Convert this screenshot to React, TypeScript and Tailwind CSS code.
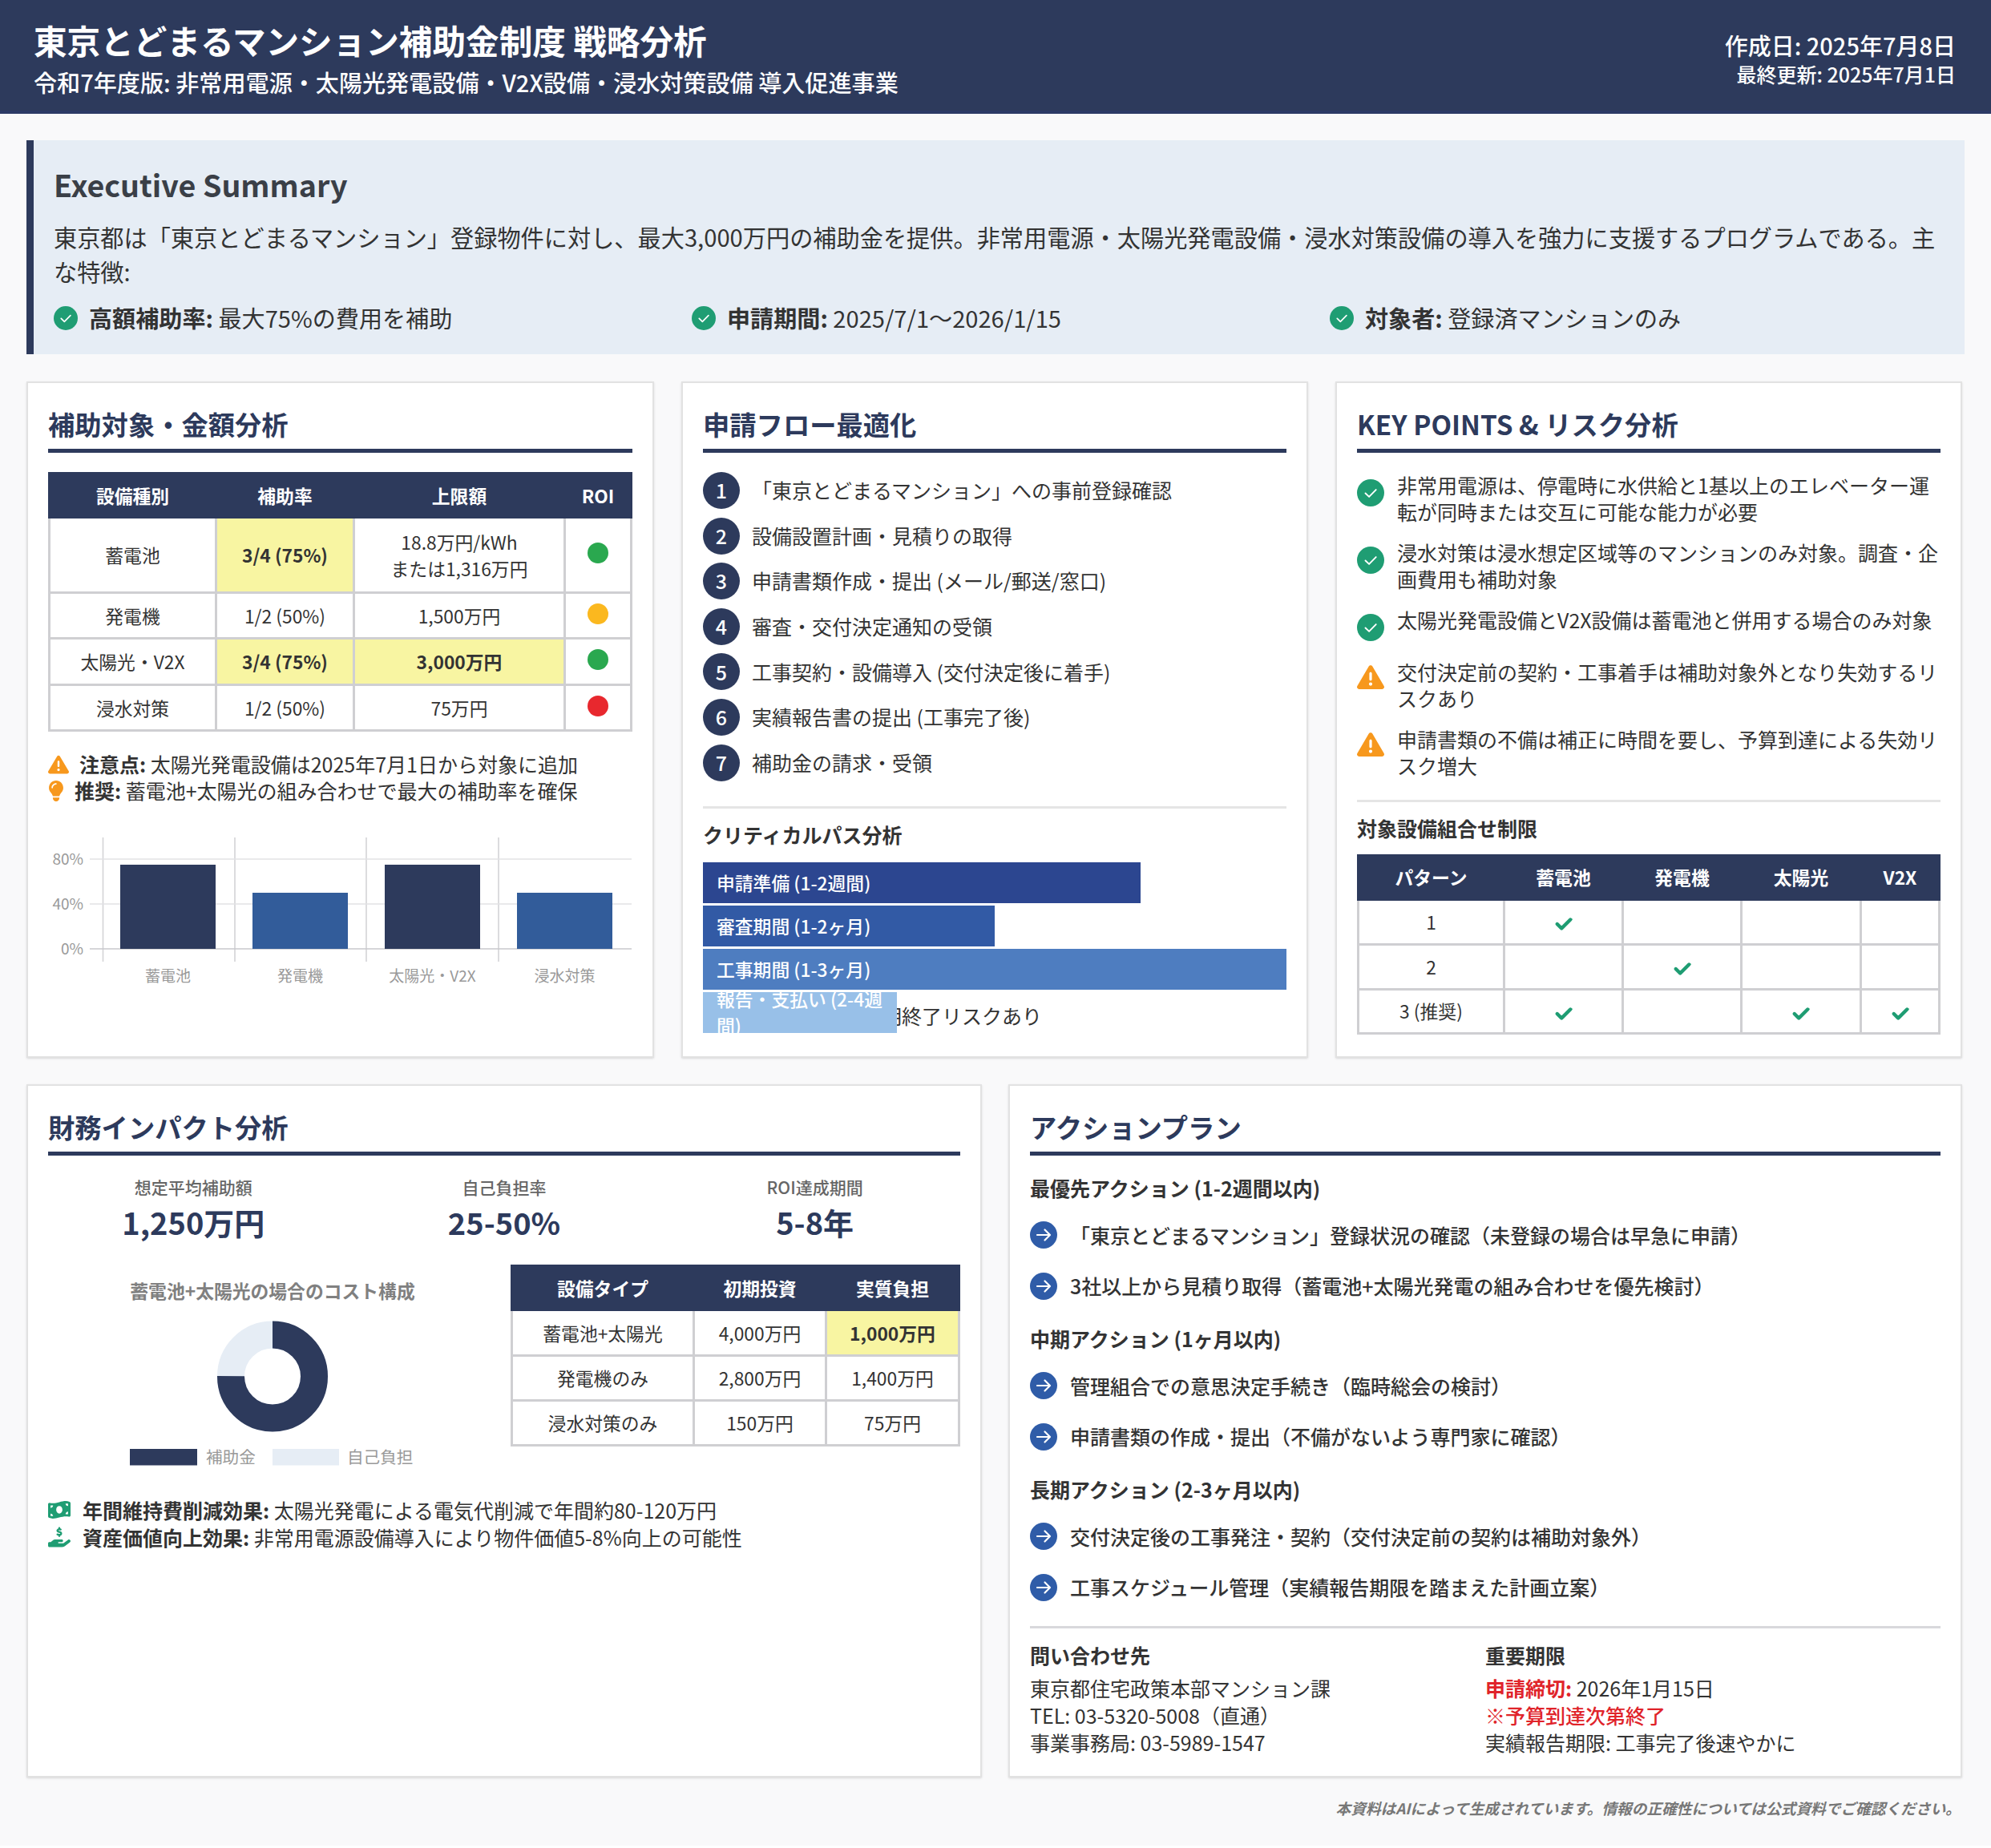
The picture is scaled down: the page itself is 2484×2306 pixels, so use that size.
import { FaCheck, FaTriangleExclamation, FaLightbulb, FaMoneyBillWave, FaHandHoldingDollar } from 'react-icons/fa6';
import type { ReactNode } from 'react';

function CheckCircle({ className }: { className: string }) {
  return (
    <svg viewBox="0 0 34 34" className={className}>
      <circle cx="17" cy="17" r="17" fill="#1f9d73" />
      <path d="M10.5 17.5l4.6 4.4 8.6-8.8" fill="none" stroke="#fff" strokeWidth="1.9" strokeLinecap="round" strokeLinejoin="round" />
    </svg>
  );
}

function ArrowCircle() {
  return (
    <svg viewBox="0 0 34 34" className="w-[34px] h-[34px] shrink-0">
      <circle cx="17" cy="17" r="17" fill="#2f5ca8" />
      <path d="M9 17h15.5M18.5 10.5l6.5 6.5-6.5 6.5" fill="none" stroke="#fff" strokeWidth="2.2" strokeLinecap="round" strokeLinejoin="round" />
    </svg>
  );
}

function Heading({ children }: { children: ReactNode }) {
  return (
    <h2 className="text-[33.3px] leading-[44px] font-bold text-[#2d3a5c] pb-[9px] border-b-[5px] border-[#2d3a5c] mb-[24px]">
      {children}
    </h2>
  );
}

function Th({ children }: { children: ReactNode }) {
  return <th className="border-[3px] border-[#2d3a5c] bg-[#2d3a5c] text-white font-bold text-center">{children}</th>;
}

function Td({ children, hi }: { children?: ReactNode; hi?: boolean }) {
  return (
    <td className={`border-[3px] border-[#cfcfd2] text-center ${hi ? 'bg-[#f8f5a2] font-semibold' : ''}`}>{children}</td>
  );
}

function Dot({ color }: { color: string }) {
  return <span className={`block mx-auto mb-[5px] w-[26px] h-[26px] rounded-full ${color}`} />;
}

function Tick() {
  return <FaCheck strokeWidth={40} className="inline-block w-[22px] h-[22px] text-[#1f9d73]" />;
}

const steps = [
  '「東京とどまるマンション」への事前登録確認',
  '設備設置計画・見積りの取得',
  '申請書類作成・提出 (メール/郵送/窓口)',
  '審査・交付決定通知の受領',
  '工事契約・設備導入 (交付決定後に着手)',
  '実績報告書の提出 (工事完了後)',
  '補助金の請求・受領',
];

const actions = [
  {
    title: '最優先アクション (1-2週間以内)',
    items: ['「東京とどまるマンション」登録状況の確認（未登録の場合は早急に申請）', '3社以上から見積り取得（蓄電池+太陽光発電の組み合わせを優先検討）'],
  },
  {
    title: '中期アクション (1ヶ月以内)',
    items: ['管理組合での意思決定手続き（臨時総会の検討）', '申請書類の作成・提出（不備がないよう専門家に確認）'],
  },
  {
    title: '長期アクション (2-3ヶ月以内)',
    items: ['交付決定後の工事発注・契約（交付決定前の契約は補助対象外）', '工事スケジュール管理（実績報告期限を踏まえた計画立案）'],
  },
];

function BarChart() {
  const bars = [
    { x: 90, y: 40, fill: '#2d3a5c', label: '蓄電池' },
    { x: 255, y: 75, fill: '#325c9a', label: '発電機' },
    { x: 420, y: 40, fill: '#2d3a5c', label: '太陽光・V2X' },
    { x: 585, y: 75, fill: '#325c9a', label: '浸水対策' },
  ];
  return (
    <svg viewBox="0 0 730 200" className="w-[730px] h-[200px] mt-[36px]">
      {[68.5, 233, 397, 562].map((x) => (
        <line key={x} x1={x} x2={x} y1={6} y2={161} stroke="#d4d4d6" strokeWidth="1.6" />
      ))}
      {[33, 89].map((y) => (
        <line key={y} x1={52} x2={728} y1={y} y2={y} stroke="#e2e2e4" strokeWidth="1.6" />
      ))}
      <line x1={52} x2={728} y1={145} y2={145} stroke="#c8c8cc" strokeWidth="1.6" />
      {bars.map((b) => (
        <rect key={b.x} x={b.x} y={b.y} width={119} height={145 - b.y} fill={b.fill} />
      ))}
      {[['80%', 33], ['40%', 89], ['0%', 145]].map(([t, y]) => (
        <text key={t} x={44} y={Number(y) + 7} textAnchor="end" fontSize="19" fill="#999">{t}</text>
      ))}
      {bars.map((b) => (
        <text key={b.label} x={b.x + 59.5} y={186} textAnchor="middle" fontSize="19" fill="#999">{b.label}</text>
      ))}
    </svg>
  );
}

function CostChart() {
  const c = 2 * Math.PI * 52;
  return (
    <svg viewBox="0 0 560 250" className="w-[560px] h-[250px] mt-[12px]">
      <text x={280} y={30} textAnchor="middle" fontSize="22.8" fontWeight="700" fill="#808080">蓄電池+太陽光の場合のコスト構成</text>
      <g transform="rotate(-90 280 127.5)">
        <circle cx={280} cy={127.5} r={52} fill="none" stroke="#e6edf5" strokeWidth="34" />
        <circle cx={280} cy={127.5} r={52} fill="none" stroke="#2d3a5c" strokeWidth="34" strokeDasharray={`${c * 0.75} ${c}`} />
      </g>
      <rect x={102} y={218} width={84} height={20.5} fill="#2d3a5c" />
      <text x={197} y={236} fontSize="20.6" fill="#999">補助金</text>
      <rect x={280} y={218} width={83} height={20.5} fill="#e6edf5" />
      <text x={373} y={236} fontSize="20.6" fill="#999">自己負担</text>
    </svg>
  );
}

export default function App() {
  return (
    <div className="min-h-[2303px] bg-[#f9f9fa] text-[#333] font-['Noto_Sans_CJK_JP','Noto_Sans',sans-serif]">
      {/* Header */}
      <header className="h-[142px] bg-[#2d3a5c] border-b-[4px] border-[#2c3a66] pl-[42px] pr-[44px] pt-[25px] flex justify-between text-white">
        <div>
          <h1 className="text-[41.6px] leading-[50px] font-bold">東京とどまるマンション補助金制度 戦略分析</h1>
          <p className="text-[29.1px] leading-[40px] mt-[6.5px] font-medium">令和7年度版: 非常用電源・太陽光発電設備・V2X設備・浸水対策設備 導入促進事業</p>
        </div>
        <div className="text-right mt-[10.5px]">
          <p className="text-[29px] leading-[40px] font-medium">作成日: 2025年7月8日</p>
          <p className="text-[25px] leading-[32px] font-medium">最終更新: 2025年7月1日</p>
        </div>
      </header>

      <main className="px-[33px] pt-[33px]">
        {/* Summary */}
        <section className="h-[267px] bg-[#e6edf5] border-l-[9px] border-[#2d3a5c] pl-[25px] pr-[22px] pt-[31px]">
          <h2 className="text-[37.6px] leading-[48px] font-bold text-[#3a3f47]">Executive Summary</h2>
          <p className="text-[29.2px] leading-[43px] mt-[20px]">
            東京都は「東京とどまるマンション」登録物件に対し、最大3,000万円の補助金を提供。非常用電源・太陽光発電設備・浸水対策設備の導入を強力に支援するプログラムである。主な特徴:
          </p>
          <div className="grid grid-cols-3 gap-[26px] mt-[20px] text-[29.1px] leading-[33px]">
            <div className="flex items-center gap-[14px]">
              <CheckCircle className="w-[30px] h-[30px] shrink-0" />
              <span><b>高額補助率:</b> 最大75%の費用を補助</span>
            </div>
            <div className="flex items-center gap-[14px]">
              <CheckCircle className="w-[30px] h-[30px] shrink-0" />
              <span><b>申請期間:</b> 2025/7/1〜2026/1/15</span>
            </div>
            <div className="flex items-center gap-[14px]">
              <CheckCircle className="w-[30px] h-[30px] shrink-0" />
              <span><b>対象者:</b> 登録済マンションのみ</span>
            </div>
          </div>
        </section>

        {/* Top cards */}
        <div className="grid grid-cols-[783px_782px_1fr] gap-[34px] mt-[34px] mr-[3px]">
          <section className="h-[844px] bg-white border-2 border-[#e2e2e2] shadow-sm px-[25px] pt-[29px]">
            <Heading>補助対象・金額分析</Heading>
            <table className="w-full table-fixed border-collapse text-[22.8px] leading-[33px]">
              <colgroup>
                <col className="w-[208px]" />
                <col className="w-[172px]" />
                <col className="w-[263px]" />
                <col />
              </colgroup>
              <thead>
                <tr className="h-[55px]"><Th>設備種別</Th><Th>補助率</Th><Th>上限額</Th><Th>ROI</Th></tr>
              </thead>
              <tbody>
                <tr className="h-[94px]">
                  <Td>蓄電池</Td><Td hi>3/4 (75%)</Td>
                  <Td>18.8万円/kWh<br />または1,316万円</Td>
                  <Td><Dot color="bg-[#2aa84f]" /></Td>
                </tr>
                <tr className="h-[57px]">
                  <Td>発電機</Td><Td>1/2 (50%)</Td><Td>1,500万円</Td>
                  <Td><Dot color="bg-[#fbb81f]" /></Td>
                </tr>
                <tr className="h-[58px]">
                  <Td>太陽光・V2X</Td><Td hi>3/4 (75%)</Td><Td hi>3,000万円</Td>
                  <Td><Dot color="bg-[#2aa84f]" /></Td>
                </tr>
                <tr className="h-[57px]">
                  <Td>浸水対策</Td><Td>1/2 (50%)</Td><Td>75万円</Td>
                  <Td><Dot color="bg-[#e8282e]" /></Td>
                </tr>
              </tbody>
            </table>
            <div className="mt-[24px] text-[25px] leading-[33px]">
              <p className="flex items-center">
                <FaTriangleExclamation className="w-[26px] h-[26px] text-[#f7981d] mr-[13px] shrink-0" />
                <span className="whitespace-nowrap"><b>注意点:</b> 太陽光発電設備は2025年7月1日から対象に追加</span>
              </p>
              <p className="flex items-center">
                <FaLightbulb className="w-[20px] h-[26px] text-[#f7981d] mr-[13px] shrink-0" />
                <span className="whitespace-nowrap"><b>推奨:</b> 蓄電池+太陽光の組み合わせで最大の補助率を確保</span>
              </p>
            </div>
            <BarChart />
          </section>

          <section className="h-[844px] bg-white border-2 border-[#e2e2e2] shadow-sm px-[25px] pt-[29px]">
            <Heading>申請フロー最適化</Heading>
            <ol className="flex flex-col gap-[10.6px] mt-[2px]">
              {steps.map((s, i) => (
                <li key={s} className="flex items-center text-[25px]">
                  <span className="w-[46px] h-[46px] rounded-full bg-[#2d3a5c] text-white flex items-center justify-center shrink-0 mr-[15px] font-medium">{i + 1}</span>
                  <span>{s}</span>
                </li>
              ))}
            </ol>
            <div className="h-[3px] bg-[#e5e5e5] mt-[31px]" />
            <h3 className="text-[25px] leading-[33px] font-bold mt-[16px]">クリティカルパス分析</h3>
            <div className="mt-[18px] flex flex-col gap-[3px] text-[22.8px] leading-[33px] text-white font-medium">
              <div className="h-[51px] w-[75%] bg-[#2c4690] px-[17px] flex items-center">申請準備 (1-2週間)</div>
              <div className="h-[51px] w-[50%] bg-[#325aa5] px-[17px] flex items-center">審査期間 (1-2ヶ月)</div>
              <div className="h-[51px] w-full bg-[#4e7dc0] px-[17px] flex items-center">工事期間 (1-3ヶ月)</div>
              <div className="relative z-10 h-[51px] w-[33.3%] bg-[#98c0e8] px-[17px] flex items-center overflow-hidden">報告・支払い (2-4週間)</div>
            </div>
            <p className="-mt-[38px] pl-[23px] text-[25px] leading-[33px]">※予算到達時に早期終了リスクあり</p>
          </section>

          <section className="h-[844px] bg-white border-2 border-[#e2e2e2] shadow-sm px-[25px] pt-[29px]">
            <Heading>KEY POINTS &amp; リスク分析</Heading>
            <ul className="flex flex-col gap-[18px] mt-[5px] text-[25px] leading-[33px]">
              {[
                '非常用電源は、停電時に水供給と1基以上のエレベーター運転が同時または交互に可能な能力が必要',
                '浸水対策は浸水想定区域等のマンションのみ対象。調査・企画費用も補助対象',
                '太陽光発電設備とV2X設備は蓄電池と併用する場合のみ対象',
              ].map((t) => (
                <li key={t} className="flex gap-[16px]">
                  <CheckCircle className="w-[34px] h-[34px] shrink-0 mt-[9px]" />
                  <span>{t}</span>
                </li>
              ))}
            </ul>
            <ul className="flex flex-col gap-[18px] mt-[22px] text-[25px] leading-[33px]">
              {[
                '交付決定前の契約・工事着手は補助対象外となり失効するリスクあり',
                '申請書類の不備は補正に時間を要し、予算到達による失効リスク増大',
              ].map((t) => (
                <li key={t} className="flex gap-[16px]">
                  <FaTriangleExclamation className="w-[34px] h-[34px] shrink-0 mt-[6px] text-[#f7981d]" />
                  <span>{t}</span>
                </li>
              ))}
            </ul>
            <div className="h-[3px] bg-[#e5e5e5] mt-[26px]" />
            <h3 className="text-[25px] leading-[33px] font-bold mt-[15.5px]">対象設備組合せ制限</h3>
            <table className="w-full table-fixed border-collapse text-[22.8px] leading-[33px] mt-[16px]">
              <colgroup>
                <col className="w-[182px]" />
                <col className="w-[148px]" />
                <col className="w-[148px]" />
                <col className="w-[149px]" />
                <col />
              </colgroup>
              <thead>
                <tr className="h-[55px]"><Th>パターン</Th><Th>蓄電池</Th><Th>発電機</Th><Th>太陽光</Th><Th>V2X</Th></tr>
              </thead>
              <tbody>
                <tr className="h-[56px]"><Td>1</Td><Td><Tick /></Td><Td /><Td /><Td /></tr>
                <tr className="h-[56px]"><Td>2</Td><Td /><Td><Tick /></Td><Td /><Td /></tr>
                <tr className="h-[55px]"><Td>3 (推奨)</Td><Td><Tick /></Td><Td /><Td><Tick /></Td><Td><Tick /></Td></tr>
              </tbody>
            </table>
          </section>
        </div>

        {/* Bottom cards */}
        <div className="grid grid-cols-[1192px_1fr] gap-[33px] mt-[33px] mr-[3px]">
          <section className="h-[865px] bg-white border-2 border-[#e2e2e2] shadow-sm px-[25px] pt-[29px]">
            <Heading>財務インパクト分析</Heading>
            <div className="grid grid-cols-3 gap-[25px] mt-[7px] text-center">
              {[
                ['想定平均補助額', '1,250万円'],
                ['自己負担率', '25-50%'],
                ['ROI達成期間', '5-8年'],
              ].map(([label, value]) => (
                <div key={label}>
                  <p className="text-[21px] leading-[30px] font-medium text-[#666]">{label}</p>
                  <p className="text-[38px] leading-[50px] mt-[4px] font-bold text-[#2d3a5c]">{value}</p>
                </div>
              ))}
            </div>
            <div className="flex justify-between mt-[28px]">
              <CostChart />
              <table className="w-[561px] h-[224px] table-fixed border-collapse text-[22.8px] leading-[33px] self-start">
                <colgroup>
                  <col className="w-[227px]" />
                  <col className="w-[165px]" />
                  <col />
                </colgroup>
                <thead>
                  <tr className="h-[55px]"><Th>設備タイプ</Th><Th>初期投資</Th><Th>実質負担</Th></tr>
                </thead>
                <tbody>
                  <tr className="h-[57px]"><Td>蓄電池+太陽光</Td><Td>4,000万円</Td><Td hi>1,000万円</Td></tr>
                  <tr className="h-[56px]"><Td>発電機のみ</Td><Td>2,800万円</Td><Td>1,400万円</Td></tr>
                  <tr className="h-[56px]"><Td>浸水対策のみ</Td><Td>150万円</Td><Td>75万円</Td></tr>
                </tbody>
              </table>
            </div>
            <div className="mt-[27px] text-[25px] leading-[34px]">
              <p className="flex items-center">
                <FaMoneyBillWave className="w-[28px] h-[28px] text-[#1f9d73] mr-[15px] shrink-0" />
                <span><b>年間維持費削減効果:</b> 太陽光発電による電気代削減で年間約80-120万円</span>
              </p>
              <p className="flex items-center">
                <FaHandHoldingDollar className="w-[28px] h-[28px] text-[#1f9d73] mr-[15px] shrink-0" />
                <span><b>資産価値向上効果:</b> 非常用電源設備導入により物件価値5-8%向上の可能性</span>
              </p>
            </div>
          </section>

          <section className="h-[865px] bg-white border-2 border-[#e2e2e2] shadow-sm px-[25px] pt-[29px]">
            <Heading>アクションプラン</Heading>
            <div className="mt-[6.5px] text-[25px] leading-[33px]">
              {actions.map((a, i) => (
                <div key={a.title} className={i > 0 ? 'mt-[32.5px]' : ''}>
                  <h3 className="font-bold">{a.title}</h3>
                  <ul className="mt-[25px] flex flex-col gap-[29.5px]">
                    {a.items.map((t) => (
                      <li key={t} className="flex items-center gap-[16px] font-medium">
                        <ArrowCircle />
                        <span>{t}</span>
                      </li>
                    ))}
                  </ul>
                </div>
              ))}
            </div>
            <div className="h-[3px] bg-[#d8d8dc] mt-[31.5px]" />
            <div className="grid grid-cols-2 mt-[16px] text-[25px] leading-[34px]">
              <div>
                <h3 className="font-bold mb-[7px]">問い合わせ先</h3>
                <p>東京都住宅政策本部マンション課</p>
                <p>TEL: 03-5320-5008（直通）</p>
                <p>事業事務局: 03-5989-1547</p>
              </div>
              <div>
                <h3 className="font-bold mb-[7px]">重要期限</h3>
                <p><b className="text-[#e0242a]">申請締切:</b> 2026年1月15日</p>
                <p className="text-[#e0242a] font-medium">※予算到達次第終了</p>
                <p>実績報告期限: 工事完了後速やかに</p>
              </div>
            </div>
          </section>
        </div>

        <p className="mt-[23px] pr-[5px] text-right text-[18.7px] leading-[30px] italic font-semibold text-[#777]">
          本資料はAIによって生成されています。情報の正確性については公式資料でご確認ください。
        </p>
      </main>
    </div>
  );
}
